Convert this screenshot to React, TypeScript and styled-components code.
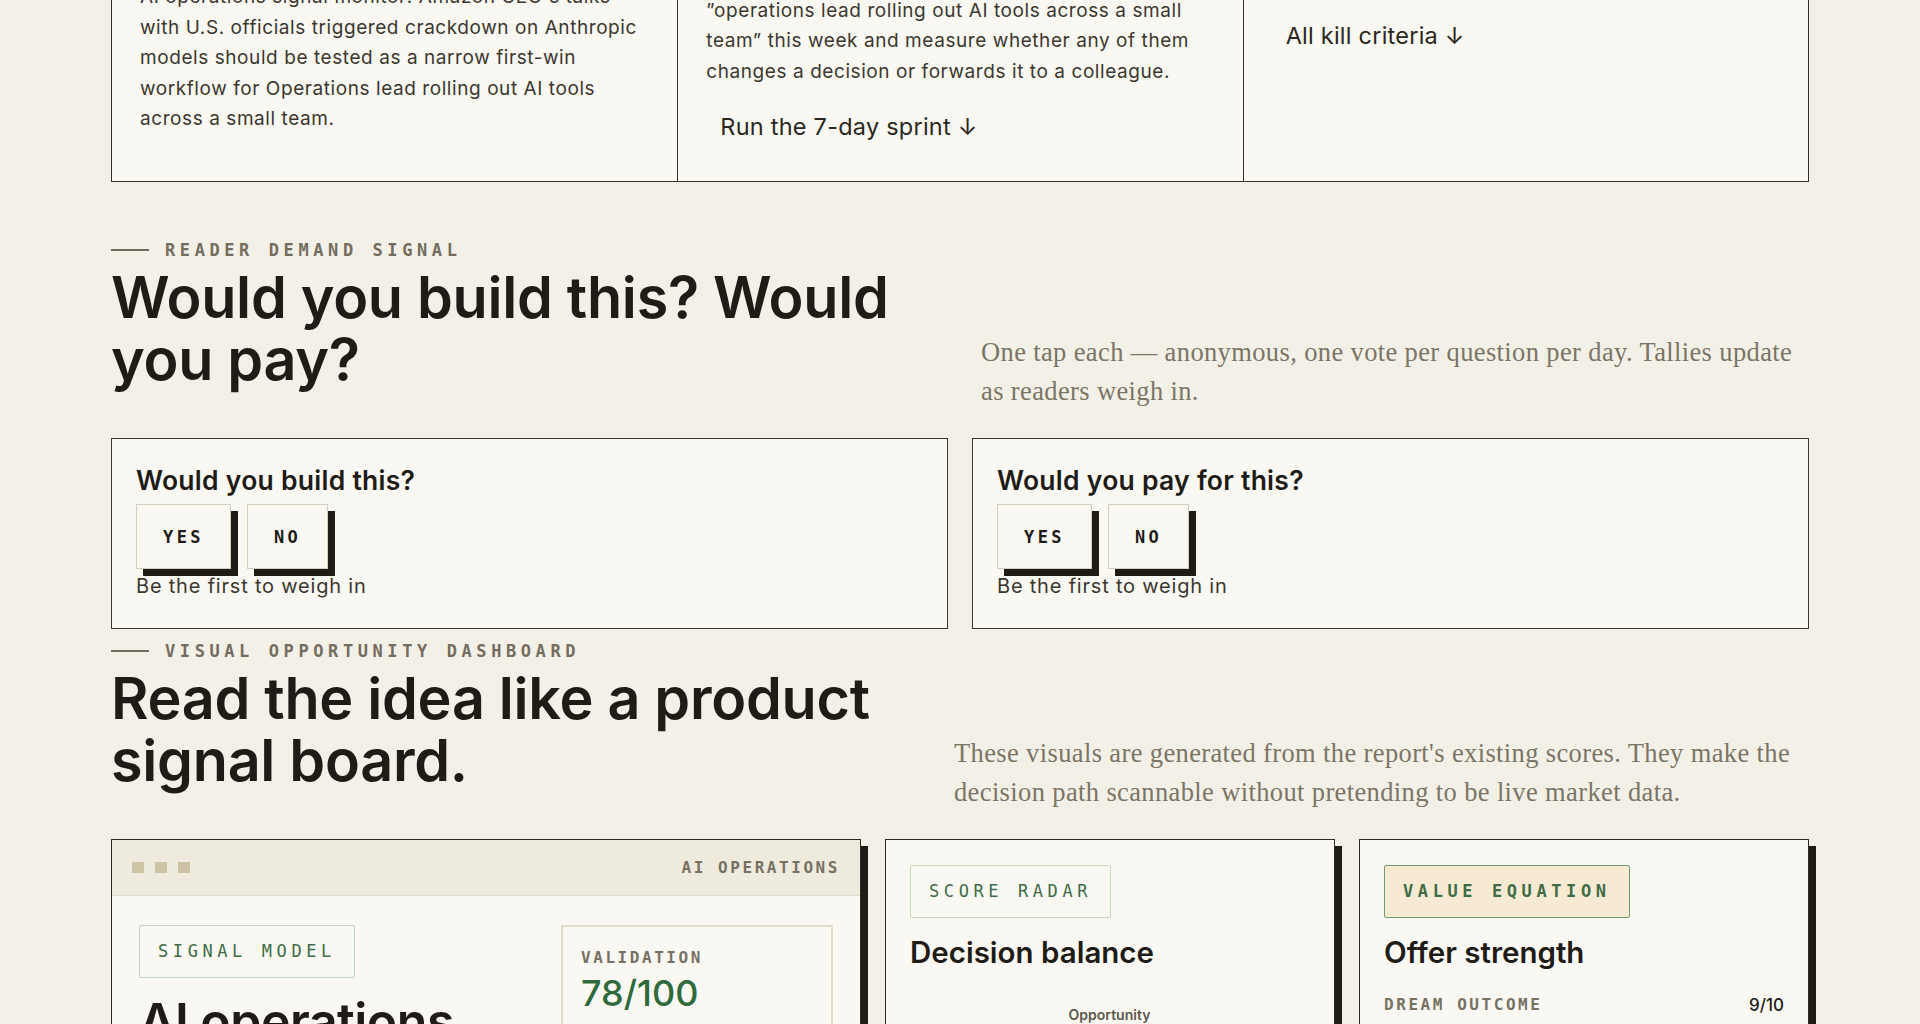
import React from "react";
import styled, { createGlobalStyle } from "styled-components";

const GlobalStyle = createGlobalStyle`
  * { box-sizing: border-box; }
  html, body {
    margin: 0;
    padding: 0;
    overflow: hidden;
    background: #f3f0e7;
  }
  body {
    font-family: Inter, "Noto Sans", sans-serif;
    color: #1f1c17;
  }
`;

const MONO = `"DejaVu Sans Mono", "Liberation Mono", monospace`;
const SERIF = `"Liberation Serif", "DejaVu Serif", serif`;

// the page is shown scrolled part way down, so the sprint row starts above the fold
const Page = styled.main`
  width: 1698px;
  margin: -144px auto 0;
`;

const StepGrid = styled.div`
  display: grid;
  grid-template-columns: repeat(3, 1fr);
  border: 1.5px solid #34312a;
  background: #faf8f3;
`;

const Step = styled.div`
  padding: 28px 22px 28px 28px;
  & + & {
    border-left: 1.5px solid #34312a;
  }
`;

const StepLabel = styled.div`
  font-family: ${MONO};
  font-size: 13px;
  line-height: 20px;
  letter-spacing: 0.2em;
  color: #767061;
  margin-bottom: 14px;
`;

const StepTitle = styled.h3`
  margin: 0 0 14px;
  font-size: 26px;
  line-height: 32px;
  font-weight: 600;
`;

const StepText = styled.p<{ $mt: number }>`
  margin: ${(p) => p.$mt}px 0 0;
  font-size: 19px;
  line-height: 30.6px;
  letter-spacing: 0.03em;
  color: #3b372f;
`;

const StepLink = styled.a`
  display: inline-flex;
  margin-top: 14px;
  padding: 12px 14px;
  font-size: 23.5px;
  line-height: 28px;
  letter-spacing: 0.01em;
  color: #2a2720;
  text-decoration: none;
`;

const Section = styled.section<{ $pt: number }>`
  padding-top: ${(p) => p.$pt}px;
`;

const Header = styled.header`
  display: flex;
  justify-content: space-between;
  align-items: flex-end;
  gap: 40px;
  margin-bottom: 27px;
`;

const HeadBlock = styled.div`
  max-width: 830px;
`;

const Kicker = styled.div`
  display: flex;
  align-items: center;
  gap: 16px;
  margin-bottom: 7px;
  font-family: ${MONO};
  font-size: 17px;
  font-weight: 700;
  line-height: 20px;
  letter-spacing: 0.27em;
  text-transform: uppercase;
  color: #736d5f;
  &::before {
    content: "";
    width: 38px;
    height: 2px;
    background: #706b5d;
  }
`;

const Heading = styled.h2`
  margin: 0 0 21px;
  font-size: 57.5px;
  line-height: 61.5px;
  font-weight: 600;
  letter-spacing: -0.005em;
  color: #1f1c17;
`;

const Lede = styled.p<{ $w: number }>`
  margin: 0;
  max-width: ${(p) => p.$w}px;
  font-family: ${SERIF};
  font-size: 26.5px;
  line-height: 39px;
  letter-spacing: 0.014em;
  color: #7b7566;
`;

const VoteGrid = styled.div`
  display: grid;
  grid-template-columns: 1fr 1fr;
  gap: 24px;
`;

const VoteCard = styled.div`
  padding: 26px 24px 28px;
  border: 1.5px solid #3a372f;
  background: #faf8f3;
`;

const VoteTitle = styled.h3`
  margin: 0 0 8px;
  font-size: 26.5px;
  line-height: 31px;
  font-weight: 600;
  letter-spacing: 0.01em;
`;

const VoteButtons = styled.div`
  display: flex;
  gap: 16px;
`;

const VoteButton = styled.button`
  height: 65px;
  padding: 0 26px;
  border: 1.5px solid #d6cfbd;
  border-radius: 0;
  background: #faf8f3;
  box-shadow: 7px 7px 0 #1f1c16;
  font-family: ${MONO};
  font-size: 17px;
  font-weight: 700;
  letter-spacing: 0.2em;
  color: #1f1c17;
  cursor: pointer;
`;

const VoteHint = styled.div`
  margin-top: 4px;
  font-size: 20px;
  line-height: 27px;
  letter-spacing: 0.04em;
  color: #3b372f;
`;

const Board = styled.div`
  display: grid;
  grid-template-columns: 5fr 3fr 3fr;
  gap: 24px;
`;

const Panel = styled.div`
  border: 1.5px solid #2d2a24;
  background: #faf8f3;
  box-shadow: 7px 7px 0 #1f1c16;
  height: 400px;
`;

const PanelBar = styled.div`
  display: flex;
  align-items: center;
  justify-content: space-between;
  height: 56px;
  padding: 0 20px;
  background: #eeeadd;
  border-bottom: 1.5px solid #e2dbc8;
`;

const Dots = styled.div`
  display: flex;
  gap: 11px;
`;

const Dot = styled.span`
  width: 12px;
  height: 11px;
  background: #cdc4a6;
`;

const MonoTag = styled.span`
  font-family: ${MONO};
  font-size: 16px;
  font-weight: 700;
  line-height: 20px;
  letter-spacing: 0.16em;
  text-transform: uppercase;
  color: #777163;
`;

const PanelBody = styled.div<{ $split?: boolean }>`
  padding: ${(p) => (p.$split ? "29px 27px" : "25px 24px")};
  display: ${(p) => (p.$split ? "grid" : "block")};
  grid-template-columns: 1fr 272px;
  gap: 24px;
`;

const tones = {
  mint: { border: "#bcd4c7", bg: "transparent", weight: 400 },
  sage: { border: "#c7dbb6", bg: "transparent", weight: 400 },
  cream: { border: "#6f9c70", bg: "#f6ebd2", weight: 700 },
};

const Badge = styled.span<{ $tone: keyof typeof tones }>`
  display: inline-block;
  padding: 16px 18px;
  border: 1.5px solid ${(p) => tones[p.$tone].border};
  border-radius: 2px;
  background: ${(p) => tones[p.$tone].bg};
  font-family: ${MONO};
  font-size: 17px;
  font-weight: ${(p) => tones[p.$tone].weight};
  line-height: 19px;
  letter-spacing: 0.27em;
  color: #3f6b47;
`;

const PanelTitle = styled.h3`
  margin: 18px 0 0;
  font-size: 29.5px;
  line-height: 33.6px;
  font-weight: 600;
`;

const BigTitle = styled.h3`
  margin: 17px 0 0;
  font-size: 50px;
  line-height: 52.5px;
  font-weight: 600;
  letter-spacing: -0.01em;
`;

const ScoreBox = styled.div`
  padding: 20px 18px;
  border: 2px solid #e4ddca;
`;

const ScoreValue = styled.div`
  margin-top: 7px;
  font-size: 36px;
  line-height: 37px;
  font-weight: 500;
  color: #2f6a3c;
`;

const Meter = styled.div`
  margin-top: 22px;
  height: 8px;
  background: #ebe5d4;
`;

const MeterFill = styled.div`
  height: 100%;
  background: #3d7a4b;
`;

const RadarWrap = styled.div`
  margin-top: 35px;
`;

const FactorRow = styled.div`
  display: flex;
  justify-content: space-between;
  align-items: center;
  margin-top: 25px;
`;

const FactorValue = styled.span`
  font-size: 17px;
  line-height: 20px;
  font-weight: 500;
  color: #1f1c17;
`;

const Radar = () => {
  const cx = 198;
  const cy = 150;
  const pts = (r: number) =>
    Array.from({ length: 5 }, (_, i) => {
      const a = -Math.PI / 2 + (i * 2 * Math.PI) / 5;
      return `${cx + r * Math.cos(a)},${cy + r * Math.sin(a)}`;
    }).join(" ");
  return (
    <svg width="100%" height="300" viewBox="0 0 397 300">
      <text x={cx} y="15" textAnchor="middle" fontFamily="Inter, sans-serif" fontSize="14" fontWeight="600" fill="#5d584c">
        Opportunity
      </text>
      {[110, 82, 55, 28].map((r) => (
        <polygon key={r} points={pts(r)} fill="none" stroke="#e2dbc8" strokeWidth="1" />
      ))}
      <polygon points={pts(90)} fill="rgba(61,122,75,0.18)" stroke="#3d7a4b" strokeWidth="2" />
    </svg>
  );
};

export default function App() {
  return (
    <>
      <GlobalStyle />
      <Page>
        <StepGrid>
          <Step>
            <StepLabel>01 — THESIS</StepLabel>
            <StepTitle>The bet</StepTitle>
            <StepText $mt={31}>
              AI operations signal monitor: Amazon CEO's talks with U.S. officials triggered crackdown on Anthropic
              models should be tested as a narrow first-win workflow for Operations lead rolling out AI tools across a
              small team.
            </StepText>
          </Step>
          <Step>
            <StepLabel>02 — FIRST TEST</StepLabel>
            <StepTitle>The sprint</StepTitle>
            <StepText $mt={6}>
              Hand-deliver one brief to five people who match ”operations lead rolling out AI tools across a small
              team” this week and measure whether any of them changes a decision or forwards it to a colleague.
            </StepText>
            <StepLink href="#sprint">Run the 7-day sprint ↓</StepLink>
          </Step>
          <Step>
            <StepLabel>03 — STOP RULE</StepLabel>
            <StepTitle>Kill criteria</StepTitle>
            <StepText $mt={5}>Walk away if no one acts on it.</StepText>
            <StepLink href="#kill">All kill criteria ↓</StepLink>
          </Step>
        </StepGrid>

        <Section $pt={58}>
          <Header>
            <HeadBlock>
              <Kicker>Reader demand signal</Kicker>
              <Heading>Would you build this? Would you pay?</Heading>
            </HeadBlock>
            <Lede $w={830}>
              One tap each — anonymous, one vote per question per day. Tallies update as readers weigh in.
            </Lede>
          </Header>
          <VoteGrid>
            {["Would you build this?", "Would you pay for this?"].map((q) => (
              <VoteCard key={q}>
                <VoteTitle>{q}</VoteTitle>
                <VoteButtons>
                  <VoteButton>YES</VoteButton>
                  <VoteButton>NO</VoteButton>
                </VoteButtons>
                <VoteHint>Be the first to weigh in</VoteHint>
              </VoteCard>
            ))}
          </VoteGrid>
        </Section>

        <Section $pt={12}>
          <Header>
            <HeadBlock>
              <Kicker>Visual opportunity dashboard</Kicker>
              <Heading>Read the idea like a product signal board.</Heading>
            </HeadBlock>
            <Lede $w={855}>
              These visuals are generated from the report's existing scores. They make the decision path scannable
              without pretending to be live market data.
            </Lede>
          </Header>
          <Board>
            <Panel>
              <PanelBar>
                <Dots>
                  <Dot />
                  <Dot />
                  <Dot />
                </Dots>
                <MonoTag>AI Operations</MonoTag>
              </PanelBar>
              <PanelBody $split>
                <div>
                  <Badge $tone="mint">SIGNAL MODEL</Badge>
                  <BigTitle>AI operations signal monitor</BigTitle>
                </div>
                <div>
                  <ScoreBox>
                    <MonoTag>Validation</MonoTag>
                    <ScoreValue>78/100</ScoreValue>
                    <Meter>
                      <MeterFill style={{ width: "78%" }} />
                    </Meter>
                  </ScoreBox>
                </div>
              </PanelBody>
            </Panel>
            <Panel>
              <PanelBody>
                <Badge $tone="sage">SCORE RADAR</Badge>
                <PanelTitle>Decision balance</PanelTitle>
                <RadarWrap>
                  <Radar />
                </RadarWrap>
              </PanelBody>
            </Panel>
            <Panel>
              <PanelBody>
                <Badge $tone="cream">VALUE EQUATION</Badge>
                <PanelTitle>Offer strength</PanelTitle>
                <FactorRow>
                  <MonoTag>Dream outcome</MonoTag>
                  <FactorValue>9/10</FactorValue>
                </FactorRow>
                <Meter>
                  <MeterFill style={{ width: "90%" }} />
                </Meter>
              </PanelBody>
            </Panel>
          </Board>
        </Section>
      </Page>
    </>
  );
}
